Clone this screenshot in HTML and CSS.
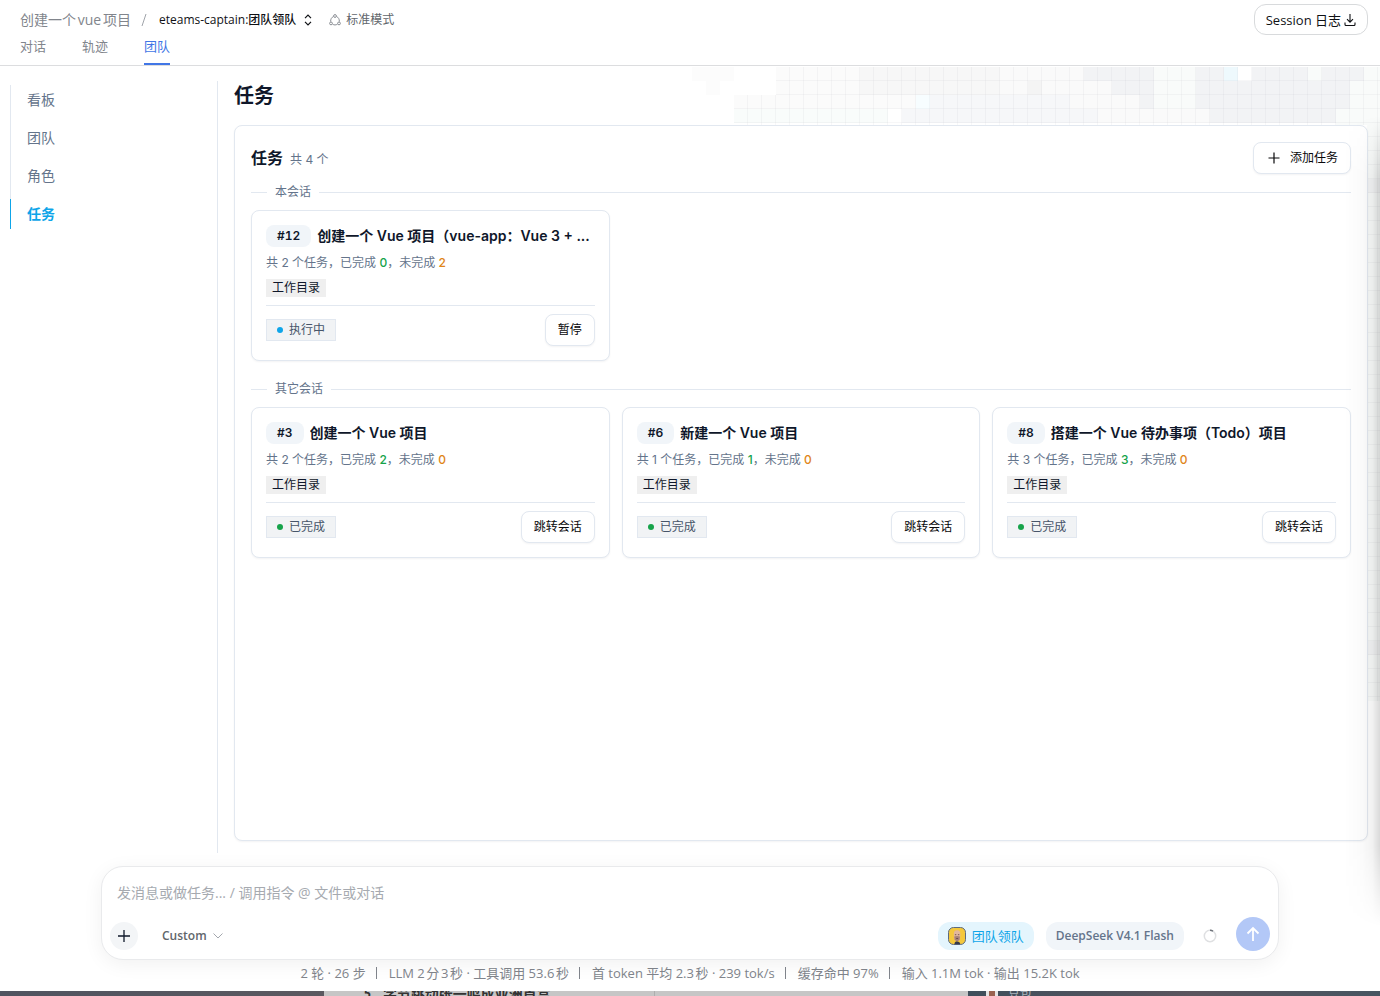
FILE: index.html
```html
<!DOCTYPE html>
<html lang="zh-CN">
<head>
<meta charset="utf-8">
<meta name="viewport" content="width=device-width, initial-scale=1">
<title>创建一个vue项目</title>
<link rel="stylesheet" href="styles.css">
</head>
<body>
<div class="app">
  <header class="topbar">
    <div class="topbar-row">
      <nav class="crumbs">
        <a class="crumb-link" href="#">创建一个vue项目</a>
        <span class="crumb-sep"><svg width="6" height="14" viewBox="0 0 6 14" fill="none" stroke="#a0a4aa"><path d="M5 1 1 13"/></svg></span>
        <button class="agent-switch">eteams-captain:团队领队
          <svg width="8" height="12" viewBox="0 0 8 12" fill="none" stroke="currentColor" stroke-width="1.2"><path d="M1 4.2 4 1.2l3 3M1 7.8l3 3 3-3"/></svg>
        </button>
        <span class="mode">
          <svg width="12" height="12" viewBox="0 0 12 12" fill="none" stroke="#8b8f95"><circle cx="6" cy="2" r="1.4"/><circle cx="2" cy="9.4" r="1.4"/><circle cx="10" cy="9.4" r="1.4"/><path d="M4.4 2.6C2.600 3.400 1.600 5 1.600 7.600M7.600 2.600c1.800.8 2.800 2.400 2.800 5M3.600 10.200c1.600 1 3.200 1 4.800 0"/></svg>
          标准模式
        </span>
      </nav>
      <button class="log-button">Session 日志
        <svg width="12" height="12" viewBox="0 0 12 12" fill="none" stroke="currentColor" stroke-width="1.1"><path d="M6 0v8M3 5.200l3 3 3-3M1 8.500v2q0 1 1 1h8q1 0 1-1v-2"/></svg>
      </button>
    </div>
    <nav class="tabs">
      <a class="tab" href="#">对话</a>
      <a class="tab" href="#">轨迹</a>
      <a class="tab tab-active" href="#">团队</a>
    </nav>
  </header>

  <main class="workspace">
    <svg class="mosaic" width="688" height="634" viewBox="0 0 688 634" aria-hidden="true">
      <defs>
        <pattern id="grid" width="14" height="14" patternUnits="userSpaceOnUse"><path d="M13.500 0v14M0 13.500h14" stroke="#5a6a70" stroke-opacity=".05"/></pattern>
      </defs>
      <g>
        <path fill="#fcfcfc" d="M0 0h42v14H0zM14 14h14v14H14z"/>
        <path fill="#fbfbfb" d="M84 0h84v28H84zM42 28h182v14H42z"/>
        <path fill="#f7f7f7" d="M168 0h140v28H168z"/>
        <path fill="#fafafa" d="M308 0h84v14h28v14H308zM378 28h70v14h70v14H406V42h-28z"/>
        <path fill="#f4f4f4" d="M336 14h14v14h-14z"/>
        <path fill="#f6f7f9" d="M238 28h140v14h28v14H210V42h28z"/>
        <path fill="#f9fcfb" d="M42 42h154v14H42z"/>
        <path fill="#f2f3f5" d="M392 0h70v42h-14V28h-28V14h-28zM504 0h168v14h-14v28h-14v14H518V42h-14z"/>
        <path fill="#f9fbfa" d="M462 0h42v42h-42zM672 0h16v634h-13V58h-31V42h14V14h14z"/>
        <path fill="#eef9fd" d="M532 0h14v14h-14z"/>
        <path fill="#f7fdff" d="M224 28h14v14h-14z"/>
        <path fill="#fff" d="M546 0h14v14h-14z"/>
        <path fill="#f9fbfa" d="M616 0h14v14h-14z"/>
        <path fill="#f4f5f6" d="M672 112h16v14h-16zM672 574h16v14h-16z"/>
      </g>
      <path fill="url(#grid)" d="M84 0h604v634h-14V58H42V28h42z"/>
    </svg>

    <nav class="sidebar">
      <ul class="side-list">
        <li><a class="side-item" href="#">看板</a></li>
        <li><a class="side-item" href="#">团队</a></li>
        <li><a class="side-item" href="#">角色</a></li>
        <li><a class="side-item side-item-active" href="#">任务</a></li>
      </ul>
    </nav>

    <section class="content">
      <h1 class="page-title">任务</h1>
      <div class="panel">
        <div class="panel-head">
          <h2 class="panel-title">任务</h2>
          <span class="panel-count">共 4 个</span>
          <button class="button add-button">
            <svg width="12" height="12" viewBox="0 0 12 12" fill="none" stroke="currentColor" stroke-width="1.200"><path d="M6 .5v11M.5 6h11"/></svg>
            添加任务
          </button>
        </div>

        <h3 class="divider">本会话</h3>
        <div class="cards">
          <article class="card">
            <div class="card-head"><span class="card-id">#12</span><h4 class="card-title">创建一个 Vue 项目（vue-app：Vue 3 + ...</h4></div>
            <p class="card-stats">共 2 个任务，已完成 <b class="done">0</b>，未完成 <b class="todo">2</b></p>
            <button class="dir">工作目录</button>
            <div class="card-foot"><span class="state state-running">执行中</span><button class="button">暂停</button></div>
          </article>
        </div>

        <h3 class="divider">其它会话</h3>
        <div class="cards">
          <article class="card">
            <div class="card-head"><span class="card-id">#3</span><h4 class="card-title">创建一个 Vue 项目</h4></div>
            <p class="card-stats">共 2 个任务，已完成 <b class="done">2</b>，未完成 <b class="todo">0</b></p>
            <button class="dir">工作目录</button>
            <div class="card-foot"><span class="state">已完成</span><button class="button">跳转会话</button></div>
          </article>
          <article class="card">
            <div class="card-head"><span class="card-id">#6</span><h4 class="card-title">新建一个 Vue 项目</h4></div>
            <p class="card-stats">共 1 个任务，已完成 <b class="done">1</b>，未完成 <b class="todo">0</b></p>
            <button class="dir">工作目录</button>
            <div class="card-foot"><span class="state">已完成</span><button class="button">跳转会话</button></div>
          </article>
          <article class="card">
            <div class="card-head"><span class="card-id">#8</span><h4 class="card-title">搭建一个 Vue 待办事项（Todo）项目</h4></div>
            <p class="card-stats">共 3 个任务，已完成 <b class="done">3</b>，未完成 <b class="todo">0</b></p>
            <button class="dir">工作目录</button>
            <div class="card-foot"><span class="state">已完成</span><button class="button">跳转会话</button></div>
          </article>
        </div>
      </div>
    </section>
    <div class="edge-shade"></div>
  </main>

  <form class="composer">
    <input class="prompt" type="text" aria-label="消息" placeholder="发消息或做任务... / 调用指令 @ 文件或对话">
    <div class="composer-row">
      <button class="plus" type="button" aria-label="添加"><svg width="12" height="12" viewBox="0 0 12 12" fill="none" stroke="currentColor" stroke-width="1.300"><path d="M6 0v12M0 6h12"/></svg></button>
      <button class="custom" type="button">Custom <svg width="10" height="6" viewBox="0 0 10 6" fill="none" stroke="#a3a7ad"><path d="m.5.5 4.500 4.500L9.500.5"/></svg></button>
      <button class="chip chip-team" type="button">
        <svg width="18" height="18" viewBox="0 0 18 18"><rect x=".5" y=".5" width="17" height="17" rx="5" fill="#f4c83c" stroke="#5c6b80"/><path d="M6.500 17.200q-.2-2.700 2.700-3 2.800.3 3.300 3z" fill="#34384c"/><path d="M5.800 7.500Q5.600 3.300 9 3.200t3.400 4.300l-.3 3.500q-.7 3.300-3 3.300T6 11z" fill="#e2b79b"/><path d="M6.200 9.600q2.900-1.400 5.800 0l-.4 2.600q-.8 1.900-2.500 1.900t-2.500-1.900z" fill="#a78177"/><path d="M6.900 7.700h1.400M9.900 7.700h1.400M8.200 11.500h1.900" stroke="#5b4140" stroke-width=".8" fill="none"/></svg>
        团队领队
      </button>
      <button class="chip" type="button">DeepSeek V4.1 Flash</button>
      <svg class="usage" width="14" height="14" viewBox="0 0 14 14" fill="none" stroke-width="1.500"><circle cx="7" cy="7" r="5.700" stroke="#dfe0e2"/><path d="M7 1.300q1.700 0 3 .8" stroke="#6f747b"/></svg>
      <button class="send" type="button" aria-label="发送"><svg width="14" height="16" viewBox="0 0 14 16" fill="none" stroke="currentColor" stroke-width="1.800"><path d="M7 15V2M1.500 7.500 7 2l5.500 5.500"/></svg></button>
    </div>
  </form>

  <footer class="usage-line">
    <span>2 轮 · 26 步</span><i class="bar"></i><span>LLM 2分3秒 · 工具调用 53.6秒</span><i class="bar"></i><span>首 token 平均 2.3秒 · 239 tok/s</span><i class="bar"></i><span>缓存命中 97%</span><i class="bar"></i><span>输入 1.1M tok · 输出 15.2K tok</span>
  </footer>
</div>

<div class="behind">
  <div class="behind-left"></div>
  <div class="behind-mid"><span class="rank">5</span><span class="news">字节跳动张一鸣成亚洲首富</span></div>
  <div class="behind-gap"></div>
  <div class="behind-right"><i class="face"></i><span class="contact">豆包</span></div>
</div>
</body>
</html>
```
FILE: styles.css
```css
* { box-sizing: border-box; }

body {
  margin: 0;
  height: 100vh;
  display: flex;
  flex-direction: column;
  overflow: hidden;
  background: #fff;
  color: #0f172a;
  font-family: "Open Sans", "Noto Sans CJK SC", sans-serif;
  font-size: 12px;
  line-height: 20px;
}

h1, h2, h3, h4, p, ul { margin: 0; padding: 0; }
button, input { font: inherit; color: inherit; margin: 0; }
button { cursor: pointer; }
a { color: inherit; text-decoration: none; }
svg { flex: none; }

.app {
  flex: 1;
  min-height: 0;
  display: flex;
  flex-direction: column;
}

/* header */
.topbar {
  padding: 4px 12px 0 20px;
  border-bottom: 1px solid #dcdddf;
  text-autospace: normal;
}
.topbar-row { display: flex; justify-content: space-between; }
.crumbs { display: flex; align-items: center; height: 31px; }
.crumb-link { font-size: 14px; color: #81858c; }
.crumb-sep { display: flex; margin: 0 12px 0 10px; }
.agent-switch {
  display: flex;
  align-items: center;
  gap: 8px;
  padding: 0;
  border: 0;
  background: none;
  color: #0f1115;
  font-weight: 500;
  text-autospace: no-autospace;
}
.mode { display: flex; align-items: center; gap: 5px; margin-left: 17px; color: #61666b; }
.log-button {
  display: flex;
  align-items: center;
  gap: 3px;
  height: 31px;
  padding: 0 11px;
  border: 1px solid #d8dadc;
  border-radius: 12px;
  background: #fff;
  color: #0f1115;
  font-size: 13px;
}
.tabs { display: flex; gap: 36px; font-size: 13px; color: #81858c; }
.tab { height: 30px; padding-top: 1px; border-bottom: 2px solid transparent; }
.tab-active { color: #4176e6; border-color: #4176e6; }

/* workspace */
.workspace {
  position: relative;
  flex: 1;
  min-height: 0;
  display: flex;
  padding: 15px 12px 13px 10px;
  font-family: Inter, "Noto Sans CJK SC", sans-serif;
}
.mosaic { position: absolute; top: 1px; right: 0; }
.edge-shade {
  position: absolute;
  top: 50px;
  right: 0;
  bottom: -60px;
  width: 36px;
  background: linear-gradient(to right, transparent, rgba(0, 0, 0, .02) 50%, rgba(0, 0, 0, .05) 78%, rgba(0, 0, 0, .15));
  mask-image: linear-gradient(transparent, #000 60px, #000 calc(100% - 80px), transparent);
  pointer-events: none;
}
.sidebar {
  width: 208px;
  padding-top: 4px;
  border-right: 1px solid #e2e8f0;
}
.side-list {
  display: flex;
  flex-direction: column;
  gap: 8px;
  list-style: none;
  box-shadow: inset 1px 0 #e2e8f0;
}
.side-item {
  display: block;
  padding: 0 16px;
  border-left: 1px solid transparent;
  color: #64748b;
  font-size: 14px;
  line-height: 30px;
}
.side-item-active { border-color: #0ea5e9; color: #0ea5e9; font-weight: 700; }
.content {
  position: relative;
  flex: 1;
  min-width: 0;
  display: flex;
  flex-direction: column;
  margin-left: 16px;
}
.page-title { font-size: 20px; line-height: 30px; font-weight: 700; margin-bottom: 14px; }
.panel {
  flex: 1;
  margin-bottom: 12px;
  padding: 16px;
  border: 1px solid #e2e8f0;
  border-radius: 8px;
  background: #fff;
  box-shadow: 0 1px 2px rgba(15, 23, 42, .05);
}
.panel-head { display: flex; align-items: center; gap: 7px; margin-bottom: 8px; }
.panel-title { font-size: 16px; font-weight: 600; }
.panel-count { padding-top: 4px; color: #64748b; }
.button {
  height: 32px;
  padding: 0 12px;
  border: 1px solid #e2e8f0;
  border-radius: 8px;
  background: #fff;
  color: #09090b;
  box-shadow: 0 1px 2px rgba(15, 23, 42, .05);
}
.add-button { display: flex; align-items: center; gap: 10px; margin-left: auto; padding: 0 12px 0 14px; }
.divider {
  display: flex;
  align-items: center;
  gap: 8px;
  margin-bottom: 8px;
  color: #64748b;
  font-size: 12px;
  font-weight: 400;
}
.divider::before, .divider::after { content: ""; width: 16px; height: 1px; background: #e2e8f0; }
.divider::after { flex: 1; }
.cards { display: grid; grid-template-columns: repeat(3, minmax(0, 1fr)); gap: 12px; }
.cards + .divider { margin-top: 18px; }
.card {
  padding: 14px;
  border: 1px solid #e2e8f0;
  border-radius: 8px;
  background: #fff;
  box-shadow: 0 1px 2px rgba(15, 23, 42, .05);
}
.card-head { display: flex; align-items: center; gap: 6px; margin-bottom: 6px; }
.card-id {
  padding: 0 11px;
  border-radius: 8px;
  background: #f1f5f9;
  font-weight: 600;
  font-variant-numeric: tabular-nums;
  line-height: 22px;
}
.card-title {
  min-width: 0;
  overflow: hidden;
  white-space: nowrap;
  text-overflow: ellipsis;
  font-size: 14px;
  font-weight: 600;
  line-height: 22px;
}
.card-stats { margin-bottom: 6px; color: #64748b; }
.card-stats b { font-weight: 500; }
.done { color: #16a34a; }
.todo { color: #e08519; }
.dir { display: block; padding: 0 6px; border: 0; background: #efefef; line-height: 18px; }
.card-foot {
  display: flex;
  align-items: center;
  justify-content: space-between;
  margin-top: 8px;
  padding-top: 8px;
  border-top: 1px solid #e2e8f0;
}
.state {
  display: flex;
  align-items: center;
  gap: 6px;
  padding: 0 10px;
  border: 1px solid #e2e8f0;
  background: #f1f3f5;
  color: #475569;
}
.state::before { content: ""; width: 6px; height: 6px; border-radius: 50%; background: #16a34a; }
.state-running::before { background: #0ea5e9; }

/* composer */
.composer {
  position: relative;
  margin: 0 101px;
  padding: 13px 8px 8px;
  border: 1px solid #e9eaec;
  border-radius: 22px;
  background: #fff;
  box-shadow: 0 4px 20px rgba(0, 0, 0, .06);
}
.prompt {
  display: block;
  width: 100%;
  height: 24px;
  margin-bottom: 13px;
  padding: 0 7px;
  border: 0;
  outline: 0;
  background: none;
  font-size: 14px;
}
.prompt::placeholder { color: #a6aab0; opacity: 1; }
.composer-row { display: flex; align-items: center; height: 34px; }
.plus {
  display: grid;
  place-items: center;
  width: 28px;
  height: 28px;
  margin-top: 4px;
  padding: 0;
  border: 0;
  border-radius: 50%;
  background: #f3f5f7;
}
.custom {
  display: flex;
  align-items: center;
  gap: 6px;
  margin: 4px auto 0 24px;
  padding: 0;
  border: 0;
  background: none;
  color: #61666b;
  font-size: 12px;
  font-weight: 600;
}
.chip {
  display: flex;
  align-items: center;
  gap: 6px;
  height: 28px;
  margin: 4px 0 0 12px;
  padding: 0 10px;
  border: 0;
  border-radius: 12px;
  background: #f1f5f9;
  color: #64748b;
  font-size: 12px;
  font-weight: 600;
}
.chip-team { background: #e4f5fd; color: #0ea5e9; font-size: 13px; font-weight: 400; }
.usage { margin: 4px 19px 0; }
.send {
  display: grid;
  place-items: center;
  width: 34px;
  height: 34px;
  padding: 0;
  border: 0;
  border-radius: 50%;
  background: #b3c8f7;
  color: #fff;
}

.usage-line {
  display: flex;
  justify-content: center;
  align-items: center;
  padding: 3px 0 8px;
  color: #81858c;
  font-size: 13px;
  text-autospace: normal;
}
.bar { width: 1px; height: 12px; margin: 0 12px 0 10px; background: #81858c; }

/* window visible under the app's lower edge */
.behind { display: flex; height: 5px; overflow: hidden; background: #c6c6c6; line-height: 5px; }
.behind-left { flex: 0 0 324px; background: linear-gradient(to right, #505460, #5b5960); }
.behind-mid { flex: 0 0 331px; display: flex; gap: 12px; padding-left: 40px; border-right: 1px solid #aeaeae; color: #333; font-weight: 700; }
.news { font-size: 14px; }
.behind-gap { flex: 1; }
.behind-right { flex: 0 0 412px; display: flex; gap: 10px; padding-left: 18px; background: linear-gradient(to right, #3f4f5c, #5c555e 55%, #465561); color: #aab4bb; }
.face { width: 12px; height: 5px; background: linear-gradient(to right, #e5e5e5 25%, #9a6250 25% 75%, #e5e5e5 75%); }
```
